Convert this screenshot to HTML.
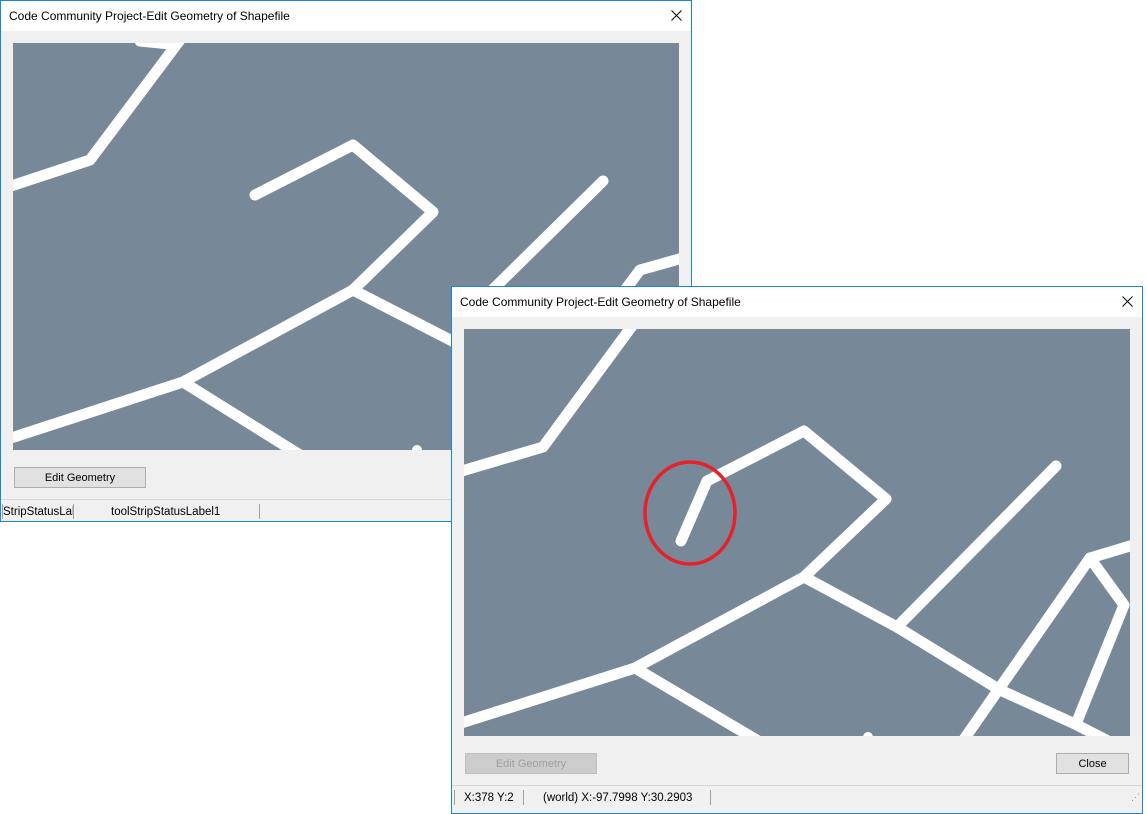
<!DOCTYPE html>
<html><head><meta charset="utf-8"><style>
*{margin:0;padding:0;box-sizing:border-box}
body{width:1147px;height:813px;background:#fff;position:relative;overflow:hidden;font-family:"Liberation Sans",sans-serif}
.win{position:absolute;background:#f0f0f0;border:1px solid #1a86d8}
.title{position:absolute;left:0;top:0;right:0;height:30px;background:#fff;font-size:12px;color:#000;padding:8px 0 0 8px}
.x{position:absolute;right:9px;top:9px;width:11px;height:11px}
.map{position:absolute;left:12px;top:42px;width:666px;height:407px;background:#778899;overflow:hidden}
.btn{position:absolute;height:21px;border:1px solid #adadad;background:#e1e1e1;font-size:11px;text-align:center;line-height:21px;color:#000}
.status{position:absolute;left:0;right:0;height:22px;border-top:1px solid #d7d7d7;font-size:11.5px;color:#000}
.sep{position:absolute;top:4px;width:1px;height:15px;background:#a0a0a0}
</style></head><body>

<div class="win" style="left:0;top:0;width:692px;height:522px">
 <div class="title">Code Community Project-Edit Geometry of Shapefile</div>
 <svg class="x" viewBox="0 0 11 11"><path d="M0.5 0.5L10.5 10.5M10.5 0.5L0.5 10.5" stroke="#111" stroke-width="1.1"/></svg>
 <div class="map">
  <svg width="666" height="407" viewBox="13 43 666 407" stroke="#fff" stroke-width="11" fill="none" stroke-linecap="round" stroke-linejoin="round">
   <path d="M180 40 L90 160 L5 188"/>
   <path d="M140 41 L170 44"/>
   <path d="M255 195 L353 145 L433 212 L353 290 L183 382 L5 440"/>
   <path d="M353 290 L460 345"/>
   <path d="M183 382 L300 455"/>
   <path d="M603 181 L470 312"/>
   <path d="M690 256 L640 270 L610 310"/>
   <circle cx="417" cy="450" r="5" fill="#fff" stroke="none"/>
  </svg>
 </div>
 <div class="btn" style="left:13px;top:466px;width:132px">Edit Geometry</div>
 <div class="status" style="top:498px">
  <div class="sep" style="left:1px"></div>
  <span style="position:absolute;left:2px;top:6px">StripStatusLal</span>
  <div class="sep" style="left:72px"></div>
  <span style="position:absolute;left:110px;top:6px">toolStripStatusLabel1</span>
  <div class="sep" style="left:258px"></div>
 </div>
</div>

<div class="win" style="left:451px;top:286px;width:692px;height:528px">
 <div class="title">Code Community Project-Edit Geometry of Shapefile</div>
 <svg class="x" viewBox="0 0 11 11"><path d="M0.5 0.5L10.5 10.5M10.5 0.5L0.5 10.5" stroke="#111" stroke-width="1.1"/></svg>
 <div class="map">
  <svg width="666" height="407" viewBox="464 329 666 407" stroke="#fff" stroke-width="11" fill="none" stroke-linecap="round" stroke-linejoin="round">
   <path d="M635 322 L543 447 L455 473"/>
   <path d="M681 541 L707 481 L804 431 L886 499 L804 577 L635 668 L455 725"/>
   <path d="M804 577 L897 627 L1000 690 L1075 724 L1110 742"/>
   <path d="M897 627 L1056 466"/>
   <path d="M635 668 L760 742"/>
   <path d="M1140 543 L1090 558 L960 745"/>
   <path d="M1090 558 L1124 605 L1076 724"/>
   <circle cx="868" cy="737" r="5" fill="#fff" stroke="none"/>
   <ellipse cx="690" cy="513" rx="45" ry="51" stroke="#e8202a" stroke-width="3.5"/>
  </svg>
 </div>
 <div class="btn" style="left:13px;top:466px;width:132px;color:#a0a0a0;background:#cccccc;border-color:#bfbfbf">Edit Geometry</div>
 <div class="btn" style="left:604px;top:466px;width:73px">Close</div>
 <div class="status" style="top:498px">
  <div class="sep" style="left:2px"></div>
  <span style="position:absolute;left:12px;top:6px">X:378 Y:2</span>
  <div class="sep" style="left:71px"></div>
  <span style="position:absolute;left:91px;top:6px">(world) X:-97.7998 Y:30.2903</span>
  <div class="sep" style="left:258px"></div>
  <span style="position:absolute;right:3px;top:6px;font-size:9px;color:#999;letter-spacing:-1px">⋰</span>
 </div>
</div>
</body></html>
